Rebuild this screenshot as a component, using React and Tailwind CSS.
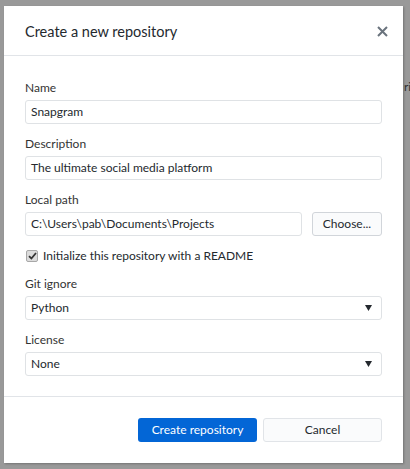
import React from 'react';

const font = { fontFamily: 'Lato, "Noto Sans", sans-serif' };

function Field({ label, children }) {
	return (
		<div className="flex flex-col">
			<label className="h-4 leading-4 text-[12px] text-[#333333] mb-1">{label}</label>
			{children}
		</div>
	);
}

function TextInput({ value, className = '' }) {
	return (
		<div
			className={`h-6 flex items-center px-[5px] border border-[#dfe2e5] rounded-[3px] bg-white text-[12px] text-[#24292e] ${className}`}
		>
			{value}
		</div>
	);
}

function Select({ value }) {
	return (
		<div className="h-6 flex items-center justify-between pl-[5px] pr-[9px] border border-[#dfe2e5] rounded-[3px] bg-white text-[12px] text-[#24292e]">
			<span>{value}</span>
			<svg width="7" height="6" viewBox="0 0 7 6">
				<path d="M0 0 H7 L3.5 6 Z" fill="#24292e" />
			</svg>
		</div>
	);
}

export default function App() {
	return (
		<div className="w-[410px] h-[469px] bg-[#999999] flex overflow-hidden" style={font}>
			<div className="mt-[6px] ml-[4px] w-[399px] h-[457px] shrink-0 bg-white flex flex-col shadow-[1px_1px_2px_rgba(0,0,0,0.25)]">
				<div className="h-[50px] shrink-0 flex items-center justify-between pl-[21px] pr-[15px] pt-[2px] border-b border-[#e1e4e8]">
					<h1 className="text-[14.5px] text-[#24292e]">Create a new repository</h1>
					<svg width="11" height="11" viewBox="0 0 11 11">
						<path d="M1 1 L10 10 M10 1 L1 10" stroke="#6a737d" strokeWidth="2" />
					</svg>
				</div>
				<div className="flex flex-col gap-3 px-[21px] pt-[24px] pb-[20px] border-b border-[#e1e4e8]">
					<Field label="Name">
						<TextInput value="Snapgram" />
					</Field>
					<Field label="Description">
						<TextInput value="The ultimate social media platform" />
					</Field>
					<Field label="Local path">
						<div className="flex gap-[10px]">
							<TextInput value="C:\Users\pab\Documents\Projects" className="flex-1" />
							<button className="w-[70px] h-6 border border-[#d1d5da] rounded-[3px] bg-[#fafbfc] text-[12px] text-[#24292e]">
								Choose...
							</button>
						</div>
					</Field>
					<div className="h-4 flex items-center gap-[5px] text-[12px] text-[#24292e]">
						<span className="ml-[1px] w-[12px] h-[12px] rounded-[2px] border border-[#a8a8a8] bg-[#dcdcdc] flex items-center justify-center">
							<svg width="9" height="8" viewBox="0 0 9 8">
								<path d="M1 4.2 L3.4 6.5 L8 1" stroke="#333333" strokeWidth="1.8" fill="none" />
							</svg>
						</span>
						Initialize this repository with a README
					</div>
					<Field label="Git ignore">
						<Select value="Python" />
					</Field>
					<Field label="License">
						<Select value="None" />
					</Field>
				</div>
				<div className="flex justify-end gap-[6px] px-[21px] pt-[21px]">
					<button className="w-[119px] h-6 rounded-[3px] bg-[#0366d6] text-white text-[12px]">
						Create repository
					</button>
					<button className="w-[119px] h-6 rounded-[3px] border border-[#e1e4e8] bg-[#fafbfc] text-[#24292e] text-[12px]">
						Cancel
					</button>
				</div>
			</div>
			<div className="mt-[79px] ml-[1px] text-[12px] leading-4 text-[#333333] whitespace-nowrap">ri</div>
		</div>
	);
}
